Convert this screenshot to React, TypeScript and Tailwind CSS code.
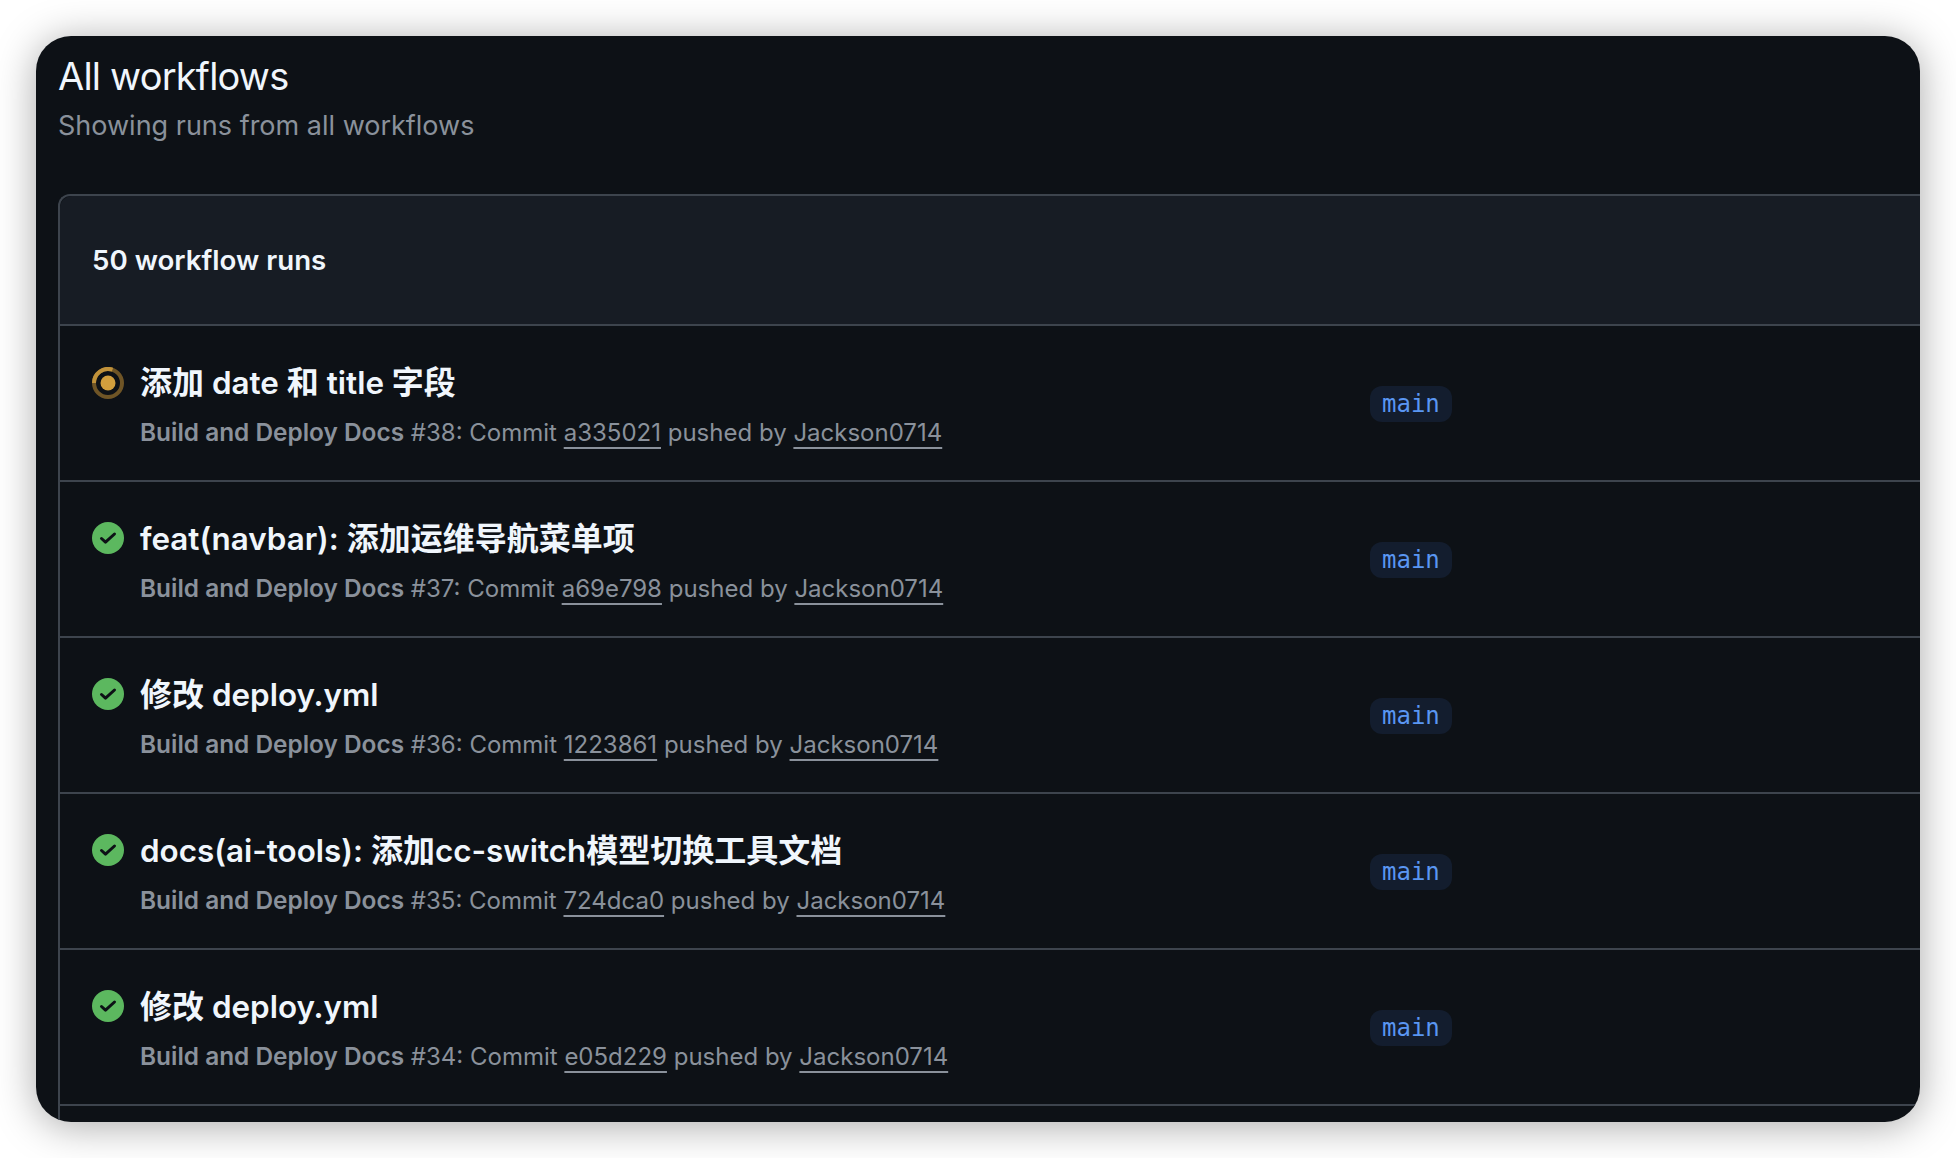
const runs = [
  { title: "添加 date 和 title 字段", num: 38, sha: "a335021", running: true },
  { title: "feat(navbar): 添加运维导航菜单项", num: 37, sha: "a69e798" },
  { title: "修改 deploy.yml", num: 36, sha: "1223861" },
  { title: "docs(ai-tools): 添加cc-switch模型切换工具文档", num: 35, sha: "724dca0" },
  { title: "修改 deploy.yml", num: 34, sha: "e05d229" },
];

function Running() {
  return (
    <svg width="32" height="32" viewBox="0 0 32 32" className="mt-[2px] shrink-0">
      <circle cx="16" cy="16" r="14" fill="none" stroke="#6f5526" strokeWidth="4" />
      <path d="M2 16 A14 14 0 0 1 20.5 2.7" fill="none" stroke="#c0923a" strokeWidth="4" />
      <circle cx="16" cy="16" r="7.5" fill="#d29f3d" />
    </svg>
  );
}

function Success() {
  return (
    <svg width="32" height="32" viewBox="0 0 32 32" className="mt-[1px] shrink-0">
      <circle cx="16" cy="16" r="16" fill="#5cb85f" />
      <path d="M9.5 16.5 L13.5 20.2 L22.5 12" fill="none" stroke="#0d1116" strokeWidth="3" strokeLinecap="round" strokeLinejoin="round" />
    </svg>
  );
}

function Title({ text }: { text: string }) {
  const parts = text.split(/([\u4e00-\u9fff]+)/);
  return (
    <div className="text-[31.4px] leading-[36px] font-semibold text-[#f0f6fc]">
      {parts.map((p, i) =>
        /[\u4e00-\u9fff]/.test(p) ? (
          <span key={i} className="text-[32px]">{p}</span>
        ) : (
          <span key={i}>{p}</span>
        ),
      )}
    </div>
  );
}

export default function App() {
  return (
    <div className="h-[1158px] w-[1956px] bg-white p-9 font-['Inter','Noto_Sans_CJK_SC',sans-serif]">
      <div className="h-[1086px] w-[1884px] overflow-hidden rounded-[35px] bg-[#0d1116] pl-[22px] shadow-[0_4px_40px_rgba(0,0,0,0.34)]">
        <h1 className="mt-[17px] text-[38px] leading-[46px] font-normal tracking-[-0.8px] text-[#f0f6fc]">All workflows</h1>
        <p className="mt-[9px] text-[27px] leading-[36px] text-[#8a919b]">Showing runs from all workflows</p>
        <div className="mt-[50px] rounded-tl-[12px] border-t-2 border-l-2 border-[#3d444d]">
          <div className="flex h-[128px] items-center rounded-tl-[12px] bg-[#171c24] pt-[2px] pl-[32px] text-[27.7px] font-semibold text-[#f0f6fc]">
            50 workflow runs
          </div>
          {runs.map((r) => (
            <div key={r.num} className="flex h-[156px] border-t-2 border-[#3d444d]">
              <div className="flex w-[1310px] shrink-0 gap-[16px] pt-[39px] pl-[32px]">
                {r.running ? <Running /> : <Success />}
                <div className={r.running ? "" : "ml-0"}>
                  <Title text={r.title} />
                  <div className="mt-[14px] text-[24px] leading-[34px] text-[#8a919b]">
                    <span className="text-[24.4px] font-semibold">Build and Deploy Docs</span> #{r.num}: Commit{" "}
                    <span className="underline decoration-[1.5px] underline-offset-[6px]">{r.sha}</span> pushed by{" "}
                    <span className="underline decoration-[1.5px] underline-offset-[6px]">Jackson0714</span>
                  </div>
                </div>
              </div>
              <div className="flex items-center pt-[2px]">
                <span className="rounded-[12px] bg-[#131d2e] px-[12px] py-[1px] font-['DejaVu_Sans_Mono',monospace] text-[24px] leading-[34px] text-[#5a96f2]">
                  main
                </span>
              </div>
            </div>
          ))}
          <div className="h-[40px] border-t-2 border-[#3d444d]" />
        </div>
      </div>
    </div>
  );
}
